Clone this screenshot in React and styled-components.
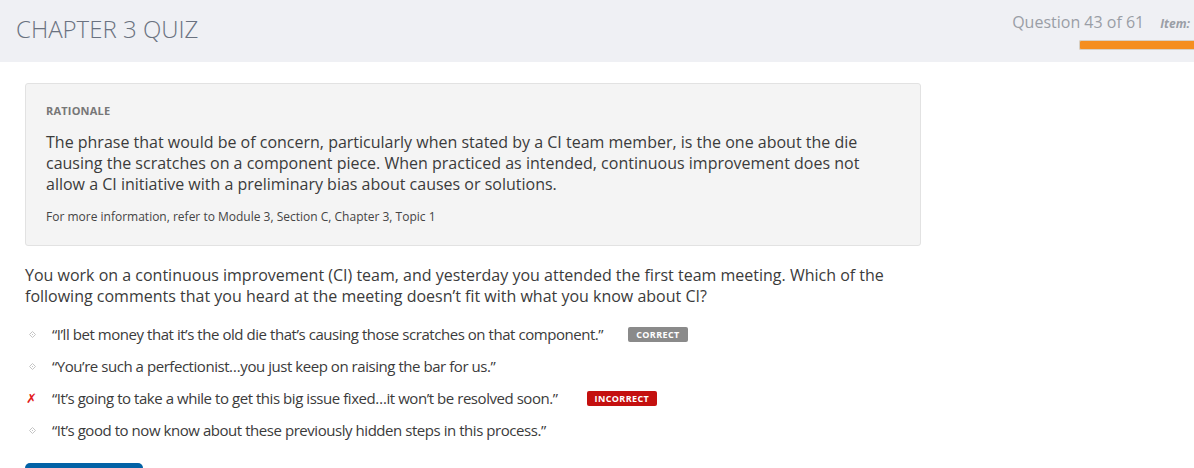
import styled, { createGlobalStyle } from "styled-components";

const GlobalStyle = createGlobalStyle`
  html, body {
    margin: 0;
    padding: 0;
    background: #ffffff;
    font-family: "Open Sans", "Liberation Sans", sans-serif;
    overflow: hidden;
  }
`

const StyledPage = styled.div`
  width: 1194px;
  height: 468px;
  overflow: hidden;
`

const StyledHeader = styled.header`
  height: 62px;
  background-color: #eff0f4;
  display: flex;
  justify-content: space-between;
  align-items: flex-start;
`

const StyledTitle = styled.h1`
  margin: 12px 0 0 16px;
  font-size: 24px;
  font-weight: 300;
  color: #6a7280;
`

const StyledProgress = styled.div`
  display: flex;
  flex-direction: column;
  align-items: flex-end;
  padding-top: 11px;
`

const StyledCounterRow = styled.div`
  display: flex;
  align-items: baseline;
  gap: 16px;
  white-space: nowrap;
  padding-right: 4px;
`

const StyledCounter = styled.span`
  font-size: 16px;
  color: #9a9ea6;
`

const StyledItemLabel = styled.span`
  font-size: 12px;
  font-weight: 700;
  font-style: italic;
  color: #9a9ea6;
`

const StyledBar = styled.div`
  margin-top: 7px;
  width: 114px;
  height: 8px;
  background-color: #f58e1f;
  border: 1px solid #d8d0c4;
  border-right: none;
  border-radius: 2px 0 0 2px;
`

const StyledContent = styled.main`
  padding: 21px 0 0 25px;
  width: 896px;
`

const StyledRationale = styled.section`
  background-color: #f4f4f4;
  border: 1px solid #e2e2e2;
  border-radius: 3px;
  padding: 19px 20px 20px 20px;
`

const StyledRationaleTitle = styled.h3`
  margin: 0;
  font-size: 11px;
  font-weight: 700;
  color: #777777;
  letter-spacing: 0.2px;
`

const StyledRationaleText = styled.p`
  margin: 14px 0 0 0;
  font-size: 16px;
  line-height: 21px;
  color: #3b3b3b;
  padding-right: 40px;
`

const StyledReference = styled.p`
  margin: 13px 0 0 0;
  font-size: 12px;
  color: #444444;
`

const StyledQuestion = styled.p`
  margin: 19px 0 0 0;
  font-size: 16px;
  line-height: 21px;
  color: #3b3b3b;
  width: 880px;
`

const StyledOptions = styled.ul`
  list-style: none;
  margin: 11px 0 0 0;
  padding: 0;
`

const StyledOption = styled.li`
  height: 32px;
  display: flex;
  align-items: center;
`

const StyledMarker = styled.span`
  width: 27px;
  display: flex;
  align-items: center;
  padding-left: ${props => props.$wrong ? "1px" : "4px"};
  box-sizing: border-box;
  color: #e21b1b;
  font-size: 13px;
  font-family: "DejaVu Sans", sans-serif;
  font-style: italic;
  font-weight: 700;
`

const StyledOptionText = styled.span`
  font-size: 15px;
  letter-spacing: -0.45px;
  color: #3b3b3b;
  white-space: nowrap;
`

const StyledBadge = styled.span`
  margin-left: ${props => props.$gap}px;
  padding: 0 8px;
  height: 15px;
  line-height: 15px;
  border-radius: 2px;
  background-color: ${props => props.$correct ? "#8a8a8a" : "#c4100f"};
  color: #ffffff;
  font-size: 9px;
  font-weight: 700;
  letter-spacing: 0.4px;
`

const StyledButton = styled.button`
  margin-top: 17px;
  width: 118px;
  height: 36px;
  border: none;
  border-radius: 5px;
  background-color: #0262a6;
`

const Diamond = () => (
  <svg width="7" height="7" viewBox="0 0 7 7">
    <path d="M3.5 0.5 L6.5 3.5 L3.5 6.5 L0.5 3.5 Z" fill="none" stroke="#c4c4c4" strokeWidth="1" />
    <rect x="3" y="3" width="1" height="1" fill="#c4c4c4" />
  </svg>
)

const options = [
  { text: "“I’ll bet money that it’s the old die that’s causing those scratches on that component.”", badge: "CORRECT", gap: 25 },
  { text: "“You’re such a perfectionist…you just keep on raising the bar for us.”" },
  { text: "“It’s going to take a while to get this big issue fixed…it won’t be resolved soon.”", badge: "INCORRECT", gap: 29, wrong: true },
  { text: "“It’s good to now know about these previously hidden steps in this process.”" },
]

const App = () => {
  return (
    <StyledPage>
      <GlobalStyle />
      <StyledHeader>
        <StyledTitle>CHAPTER 3 QUIZ</StyledTitle>
        <StyledProgress>
          <StyledCounterRow>
            <StyledCounter>Question 43 of 61</StyledCounter>
            <StyledItemLabel>Item:</StyledItemLabel>
          </StyledCounterRow>
          <StyledBar />
        </StyledProgress>
      </StyledHeader>

      <StyledContent>
        <StyledRationale>
          <StyledRationaleTitle>RATIONALE</StyledRationaleTitle>
          <StyledRationaleText>
            The phrase that would be of concern, particularly when stated by a CI team member, is the one about the die
            causing the scratches on a component piece. When practiced as intended, continuous improvement does not
            allow a CI initiative with a preliminary bias about causes or solutions.
          </StyledRationaleText>
          <StyledReference>For more information, refer to Module 3, Section C, Chapter 3, Topic 1</StyledReference>
        </StyledRationale>

        <StyledQuestion>
          You work on a continuous improvement (CI) team, and yesterday you attended the first team meeting. Which of the
          following comments that you heard at the meeting doesn’t fit with what you know about CI?
        </StyledQuestion>

        <StyledOptions>
          {options.map(option => (
            <StyledOption key={option.text}>
              <StyledMarker $wrong={option.wrong}>
                {option.wrong ? "✗" : <Diamond />}
              </StyledMarker>
              <StyledOptionText>{option.text}</StyledOptionText>
              {option.badge && (
                <StyledBadge $correct={!option.wrong} $gap={option.gap}>{option.badge}</StyledBadge>
              )}
            </StyledOption>
          ))}
        </StyledOptions>

        <StyledButton />
      </StyledContent>
    </StyledPage>
  );
};

export default App;
